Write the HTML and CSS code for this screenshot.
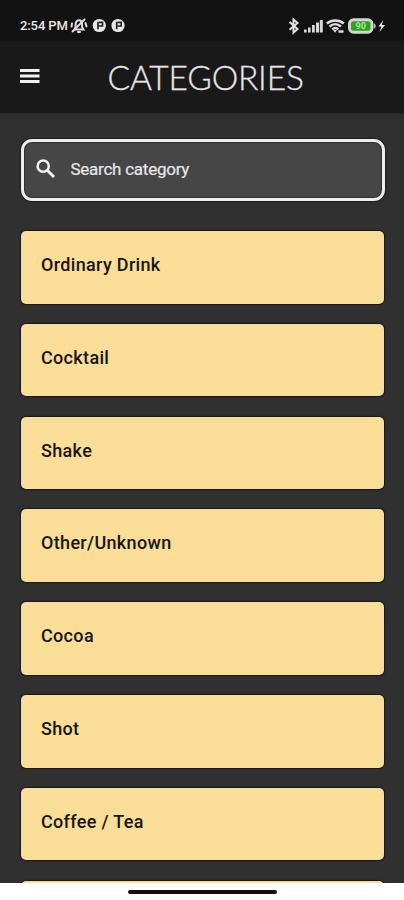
FILE: index.html
```html
<!DOCTYPE html>
<html lang="en">
<head>
<meta charset="utf-8">
<title>Categories</title>
<link rel="stylesheet" href="styles.css">
</head>
<body>
<div class="phone">
  <div class="status">
    <span class="time">2:54 PM</span>
    <svg class="notices" width="56" height="18" viewBox="0 0 56 18">
      <g fill="none" stroke="#dedede" stroke-width="2" stroke-linecap="round">
        <path d="M4.500 12.500h9l-1.400-2.200V7.500C12.100 4.700 11 3.200 9 3.200S5.600 4.700 5.600 7.500v2.800z"/>
        <path d="M2.500 14.500 14.500 2.500M1.500 9.500l.5-3M16.500 9.500 15.500 6"/>
        <path d="M8 15h2"/>
      </g>
      <circle cx="29.300" cy="8.500" r="6.600" fill="#e8e8e8"/>
      <path d="M28 4.800v7.500M29 5.300h3.500v3.700H29" fill="none" stroke="#222" stroke-width="1.700"/>
      <circle cx="48" cy="8.500" r="6.600" fill="#e8e8e8"/>
      <path d="M46.700 4.800v7.500M47.700 5.300h3.500v3.700h-3.500" fill="none" stroke="#222" stroke-width="1.700"/>
    </svg>
    <svg class="signals" width="98" height="18" viewBox="0 0 98 18">
      <path d="M1.500 5 9.500 12 5.500 15.500V2.500L9.500 6 1.500 12.700" fill="none" stroke="#e2e2e2" stroke-width="2"/>
      <g fill="#d8d8d8">
        <rect x="16" y="12.500" width="2.600" height="3"/>
        <rect x="20" y="10.500" width="2.600" height="5"/>
        <rect x="24" y="8" width="2.800" height="7.500"/>
        <rect x="28" y="5.500" width="3" height="10"/>
        <rect x="31.800" y="3" width="3" height="12.500"/>
      </g>
      <g fill="none" stroke="#dedede" stroke-width="2.400">
        <path d="M38.800 6.500c5-4 12-4 17 0M41.500 9.500c3.500-2.900 8-2.900 11.500 0M44.300 12.300c2-1.700 4-1.700 6 0"/>
      </g>
      <path d="M45 13h4l-2 2.800zM50.500 13.200h5v2.500h-5z" fill="#dedede"/>
      <rect x="61.500" y="2.800" width="22.500" height="12.400" rx="4" fill="#2ca51c" stroke="#d3d3d3" stroke-width="3"/>
      <path d="M86.200 6.500c2 .5 2 4.500 0 5z" fill="#d3d3d3"/>
      <text x="72.700" y="12.200" class="charge">90</text>
      <path d="M95.300 3 90.500 9.500h3L91.500 15l5.500-7h-3.200z" fill="#eee"/>
    </svg>
  </div>
  <header class="bar">
    <svg class="menu" width="20" height="16" viewBox="0 0 20 16">
      <path d="M0 2.500h19.500M0 8h19.500M0 13.500h19.500" stroke="#f0f0f0" stroke-width="3"/>
    </svg>
    <h1 class="title">CATEGORIES</h1>
  </header>
  <main class="content">
    <div class="search">
      <svg width="20" height="20" viewBox="0 0 20 20">
        <circle cx="7.200" cy="7.200" r="5.600" fill="none" stroke="#f2f2f2" stroke-width="2.500"/>
        <path d="M11.500 11.500 18 18" stroke="#f2f2f2" stroke-width="3"/>
      </svg>
      <span class="hint">Search category</span>
    </div>
    <div class="list">
      <div class="card"><span>Ordinary Drink</span></div>
      <div class="card"><span>Cocktail</span></div>
      <div class="card"><span>Shake</span></div>
      <div class="card"><span>Other/Unknown</span></div>
      <div class="card"><span>Cocoa</span></div>
      <div class="card"><span>Shot</span></div>
      <div class="card"><span>Coffee / Tea</span></div>
      <div class="card"></div>
    </div>
  </main>
  <footer class="nav"><div class="handle"></div></footer>
</div>
</body>
</html>
```
FILE: styles.css
```css
* { box-sizing: border-box; }
body { margin: 0; font-family: Roboto, sans-serif; }
.phone {
  width: 404px;
  height: 900px;
  display: flex;
  flex-direction: column;
  overflow: hidden;
  background: #303030;
}
.status {
  flex: none;
  height: 41px;
  padding: 17px 18px 0 20px;
  display: flex;
  align-items: flex-start;
  background: #121212;
}
.time {
  width: 50px;
  font-size: 13px;
  line-height: 18px;
  font-weight: 500;
  letter-spacing: -.1px;
  white-space: nowrap;
  color: #e8e8e8;
}
.notices { flex: none; }
.signals { flex: none; margin-left: auto; }
.charge {
  font-size: 9px;
  font-weight: 700;
  text-anchor: middle;
  fill: #a9e69c;
}
.bar {
  flex: none;
  height: 72px;
  padding-left: 20px;
  display: flex;
  align-items: flex-start;
  background: #191919;
}
.menu { flex: none; margin-top: 27px; }
.title {
  margin: 16px 0 0 67.500px;
  font-family: Lato, sans-serif;
  font-size: 33.500px;
  line-height: 40px;
  font-weight: 300;
  letter-spacing: -.2px;
  color: #e6e6e6;
  -webkit-text-stroke: .3px #e6e6e6;
}
.content {
  flex: 1;
  min-height: 0;
  overflow: hidden;
  padding: 26px 19.500px 0 20.500px;
  background: linear-gradient(#292929, #303030 8px);
}
.search {
  height: 62px;
  padding: 0 0 2px 12px;
  display: flex;
  align-items: center;
  gap: 15px;
  border: 3px solid #ededed;
  border-radius: 11px;
  background: #464646;
  box-shadow: 0 0 1px 1px #202020, inset 0 0 1px 1px #303030;
}
.hint {
  font-size: 17px;
  line-height: 22px;
  letter-spacing: -.25px;
  color: #e8e8e8;
  -webkit-text-stroke: .2px #e8e8e8;
}
.list {
  margin: 30px .5px 0;
  display: flex;
  flex-direction: column;
  gap: 20.330px;
}
.card {
  flex: none;
  height: 72.500px;
  padding: 23px 20px 0;
  border-radius: 5px;
  background: #fade98;
  box-shadow: 0 0 1px 1px #161620;
}
.card span {
  display: block;
  font-size: 18px;
  line-height: 22px;
  font-weight: 500;
  letter-spacing: .33px;
  color: #17150f;
}
.nav {
  flex: none;
  height: 17px;
  padding-top: 7px;
  background: #fff;
}
.handle {
  width: 149px;
  height: 4px;
  margin: 0 auto;
  border-radius: 2px;
  background: #111;
}
```
